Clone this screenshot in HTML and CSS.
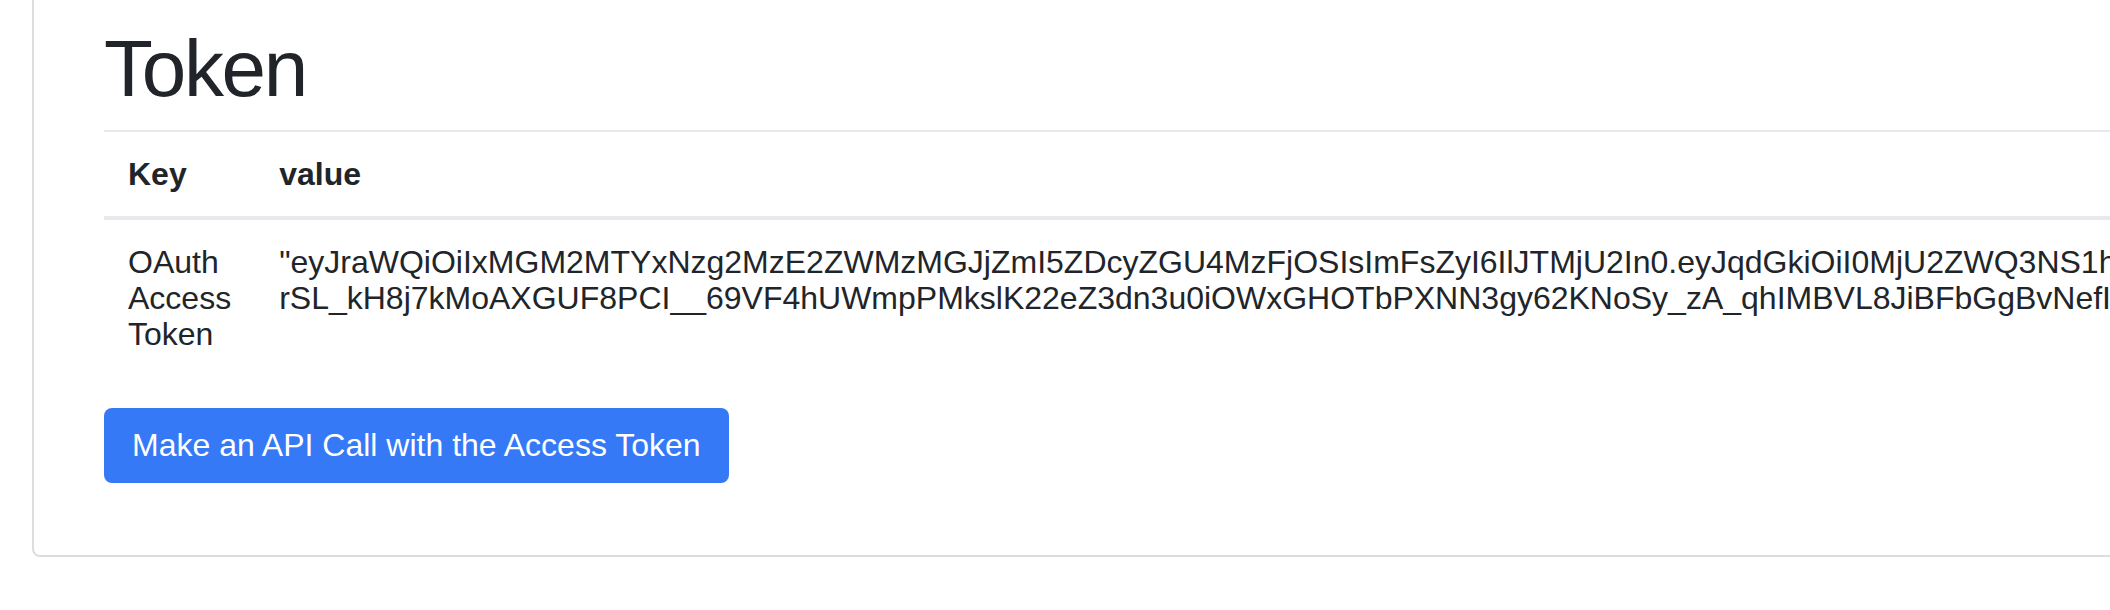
FILE: index.html
```html
<!DOCTYPE html>
<html lang="en">
<head>
<meta charset="utf-8">
<title>Token</title>
<link rel="stylesheet" href="styles.css">
</head>
<body>
<div class="page">
  <div class="card">
    <div class="card-body">
      <h1 class="title">Token</h1>
      <table class="token-table">
        <thead>
          <tr>
            <th class="col-key">Key</th>
            <th class="col-value">value</th>
          </tr>
        </thead>
        <tbody>
          <tr>
            <td class="col-key">OAuth Access Token</td>
            <td class="col-value">
              <span class="token-line">"eyJraWQiOiIxMGM2MTYxNzg2MzE2ZWMzMGJjZmI5ZDcyZGU4MzFjOSIsImFsZyI6IlJTMjU2In0.eyJqdGkiOiI0MjU2ZWQ3NS1hYjQ5LTRjZDEtOTMxZS1mZTk3YmE0MmVkNWIiLCJpc3MiOiJodHRwczovL2F1dGgu-</span>
              <span class="token-line">rSL_kH8j7kMoAXGUF8PCI__69VF4hUWmpPMkslK22eZ3dn3u0iOWxGHOTbPXNN3gy62KNoSy_zA_qhIMBVL8JiBFbGgBvNefIJw3Qk1cZr"</span>
            </td>
          </tr>
        </tbody>
      </table>
      <button class="btn-primary" type="button">Make an API Call with the Access Token</button>
    </div>
  </div>
</div>
</body>
</html>
```
FILE: styles.css
```css
html, body {
  margin: 0;
  padding: 0;
  background: #ffffff;
}

body {
  font-family: "Liberation Sans", Arial, sans-serif;
  color: #212529;
  font-size: 32px;
  line-height: 36px;
}

.page {
  width: 2110px;
  height: 610px;
  overflow: hidden;
}

.card {
  margin-left: 32px;
  width: 2400px;
  border: 2px solid #dddddd;
  border-top: none;
  border-radius: 0 0 8px 8px;
  background: #ffffff;
}

.card-body {
  padding: 21px 0 72px 70px;
}

.title {
  margin: 0 0 13px 0;
  font-size: 80px;
  line-height: 96px;
  font-weight: 400;
  letter-spacing: -2.3px;
}

.token-table {
  border-collapse: collapse;
  margin-bottom: 32px;
}

.token-table th,
.token-table td {
  padding: 24px;
  text-align: left;
  vertical-align: top;
  border-top: 2px solid #e9e9ed;
}

.token-table th {
  font-weight: 700;
  border-bottom: 4px solid #e9e9ed;
}

.token-table td {
  border-top: none;
}

.col-key {
  width: 106px;
}

.token-line {
  display: block;
  white-space: nowrap;
}

.btn-primary {
  display: block;
  font-family: "Liberation Sans", Arial, sans-serif;
  font-size: 32px;
  line-height: 37px;
  padding: 19px 28px;
  color: #ffffff;
  background: #3679f6;
  border: none;
  border-radius: 8px;
  cursor: pointer;
}
```
